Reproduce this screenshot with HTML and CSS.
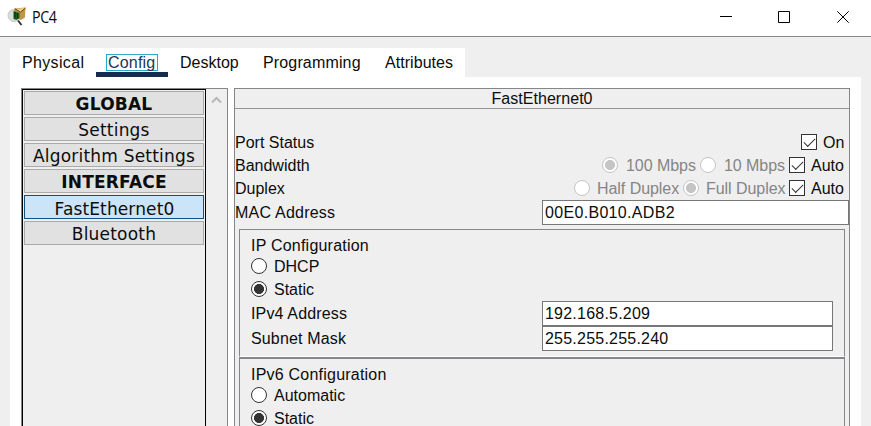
FILE: index.html
```html
<!DOCTYPE html>
<html lang="en">
<head>
<meta charset="utf-8">
<title>PC4</title>
<link rel="stylesheet" href="styles.css">
</head>
<body>
<header class="titlebar">
  <svg class="app-icon" width="20" height="20" viewBox="0 0 20 20">
    <circle cx="7" cy="8.500" r="6" fill="#d9dedb" stroke="#c3c8c5"/>
    <path d="M7 1.500l11.500-1-.5 10-4 2.500-6-2z" fill="#c39647"/>
    <path d="M8 1.800l5.500 3.400L18.500 1" fill="#ecd08a" stroke="#59401a" stroke-width="1"/>
    <path d="M6.500 4l6 2v5l-3 2-3-1z" fill="#17601c"/>
    <path d="M8 5v6M10.500 6v5" stroke="#082f0b"/>
    <path d="M11 13.500l3.500 4.500" stroke="#333" stroke-width="2"/>
  </svg>
  <h1 class="title">PC4</h1>
  <div class="controls">
    <svg width="12" height="12" viewBox="0 0 12 12"><path d="M0 5.500h12"/></svg>
    <svg class="maximize" width="12" height="12" viewBox="0 0 12 12"><path d="M.5.500h11v11H.5z"/></svg>
    <svg width="12" height="12" viewBox="0 0 12 12"><path d="M.3.300l11.400 11.400M11.700.300L.3 11.700"/></svg>
  </div>
</header>
<nav class="tabs">
  <span class="tab physical">Physical</span>
  <span class="tab active"><span class="focus">Config</span></span>
  <span class="tab desktop">Desktop</span>
  <span class="tab programming">Programming</span>
  <span class="tab attributes">Attributes</span>
</nav>
<main class="pane">
  <aside class="sidebar">
    <div class="list">
      <div class="item heading">GLOBAL</div>
      <div class="item">Settings</div>
      <div class="item">Algorithm Settings</div>
      <div class="item heading">INTERFACE</div>
      <div class="item selected">FastEthernet0</div>
      <div class="item">Bluetooth</div>
    </div>
    <div class="scroll"><svg width="11" height="8" viewBox="0 0 11 8"><path d="M1 6.500l4.500-4.500L10 6.500"/></svg></div>
  </aside>
  <section class="panel">
    <h2 class="panel-title">FastEthernet0</h2>
    <div class="row"><span>Port Status</span><span class="options"><i class="check"></i><span class="on">On</span></span></div>
    <div class="row"><span>Bandwidth</span><span class="options"><i class="radio off chosen"></i><span class="choice mbps100">100 Mbps</span><i class="radio off"></i><span class="choice mbps10">10 Mbps</span><i class="check"></i><span class="auto">Auto</span></span></div>
    <div class="row"><span>Duplex</span><span class="options"><i class="radio off"></i><span class="choice half">Half Duplex</span><i class="radio off chosen"></i><span class="choice full">Full Duplex</span><i class="check"></i><span class="auto">Auto</span></span></div>
    <div class="row mac"><span>MAC Address</span><span class="field mac-field">00E0.B010.ADB2</span></div>
    <div class="group ipv4">
      <div class="caption">IP Configuration</div>
      <div class="radio-row"><i class="radio"></i><span>DHCP</span></div>
      <div class="radio-row"><i class="radio chosen"></i><span>Static</span></div>
      <div class="field-row"><span>IPv4 Address</span><span class="field address">192.168.5.209</span></div>
      <div class="field-row"><span>Subnet Mask</span><span class="field mask">255.255.255.240</span></div>
    </div>
    <div class="group ipv6">
      <div class="caption">IPv6 Configuration</div>
      <div class="radio-row"><i class="radio"></i><span>Automatic</span></div>
      <div class="radio-row"><i class="radio chosen"></i><span>Static</span></div>
    </div>
  </section>
</main>
</body>
</html>
```
FILE: styles.css
```css
* { box-sizing: border-box; }
body {
  margin: 0;
  height: 426px;
  overflow: hidden;
  display: flex;
  flex-direction: column;
  background: #efefef;
  color: #0c0c0c;
  font: 16px/20px "Liberation Sans", Arial, sans-serif;
  white-space: nowrap;
}
.titlebar {
  flex: none;
  height: 37px;
  background: #fff;
  border-bottom: 1px solid #868788;
  display: flex;
  align-items: center;
  padding: 0 22px 0 7px;
}
.app-icon { margin-top: -2px; }
.title { margin: -3px 0 0 5px; font: 16px/20px "Open Sans", sans-serif; letter-spacing: -.4px; transform: scaleX(.89); transform-origin: left; }
.controls { margin: -3px 0 0 auto; display: flex; gap: 46px; }
.maximize { margin-right: 1px; }
.controls svg { fill: none; stroke: #000; stroke-width: 1; }
.tabs {
  flex: none;
  align-self: flex-start;
  margin: 11px 0 0 10px;
  width: 455px;
  height: 29px;
  background: #fff;
  display: flex;
}
.tab { padding-top: 5px; line-height: 20px; }
.physical { width: 86px; padding-left: 12px; letter-spacing: .35px; }
.active { width: 72px; padding: 6px 0 0 10px; border-bottom: 5px solid #162c4e; color: #203755; }
.focus { display: block; width: 52px; height: 17px; border: 1px solid #28aac8; line-height: 15px; padding-left: 1px; letter-spacing: .2px; }
.desktop { width: 83px; padding-left: 12px; }
.programming { width: 122px; padding-left: 12px; letter-spacing: .15px; }
.attributes { padding-left: 12px; letter-spacing: .05px; }
.pane { flex: 1; min-height: 0; margin: 0 10px; padding: 11px 11px 0; background: #fff; display: flex; }
.sidebar {
  width: 207px;
  border: 1px solid #85868a;
  border-bottom: 0;
  background: #efefef;
  display: flex;
}
.list {
  width: 184px;
  border: 1px solid #000;
  border-bottom: 0;
  padding: 1px;
  display: flex;
  flex-direction: column;
  gap: 2px;
}
.item {
  height: 24px;
  flex: none;
  border: 1px solid #aaa;
  background: #e1e1e1;
  text-align: center;
  font: 17px/24px "DejaVu Sans", Verdana, sans-serif;
  letter-spacing: .2px;
}
.heading { font-weight: bold; }
.selected { border-color: #105283; background: #cce4f7; line-height: 26px; letter-spacing: .12px; padding-left: 1px; }
.scroll { padding: 2px 0 0 5px; }
.scroll svg { fill: none; stroke: #b7b7b7; stroke-width: 2; margin-top: 5px; display: block; }
.panel {
  margin-left: 6px;
  width: 616px;
  border: 1px solid #85868a;
  border-bottom: 0;
  background: #efefef;
}
.panel-title {
  margin: 0 0 21px;
  height: 20px;
  font: 16px/19px "Liberation Sans", Arial, sans-serif;
  letter-spacing: .05px;
  text-align: center;
  border-bottom: 1px solid #929395;
}
.row { height: 23px; line-height: 20px; display: flex; justify-content: space-between; align-items: center; }
.row > span:first-child, .options > span { padding-top: 2px; }
.radio-row > span { padding-top: 1px; }
.options { display: flex; align-items: center; }
.radio, .check { flex: none; width: 16px; height: 16px; background: #fff; border: 1px solid #333; display: block; }
.radio { border-radius: 50%; }
.radio.chosen { background: radial-gradient(circle, #333 4.700px, #fff 5.300px); }
.off { border-color: #c5c5c5; }
.radio.off.chosen { background: radial-gradient(circle, #c5c5c5 4.700px, #fff 5.300px); }
.check { display: flex; align-items: center; justify-content: center; }
.check::after { content: ""; width: 10px; height: 5px; border: solid #333; border-width: 0 0 1.500px 1.500px; transform: translateY(-1px) rotate(-45deg); }
.on { width: 32px; padding-left: 6px; }
.auto { width: 44px; padding-left: 6px; }
.choice { padding-left: 8px; color: #858585; letter-spacing: -.05px; }
.mbps100 { width: 82px; }
.mbps10 { width: 73px; }
.half { width: 93px; padding-left: 7px; }
.full { width: 90px; padding-left: 7px; }
.mac { height: 27px; letter-spacing: .22px; }
.mac > span:first-child { margin-top: -2px; }
.field { height: 25px; border: 1px solid #777; background: #fff; padding-left: 2px; line-height: 23px; }
.mac-field { width: 307px; letter-spacing: .32px; }
.group { margin: 0 4px; padding: 5px 11px 0; border: 1px solid #85868a; border-bottom: 0; }
.ipv4 { margin-top: 3px; height: 128px; border-bottom: 1px solid #fff; }
.ipv6 { height: 80px; border-top-width: 2px; }
.caption { height: 20px; line-height: 22px; letter-spacing: .22px; }
.radio-row { height: 23px; padding-bottom: 1px; line-height: 21px; display: flex; align-items: center; gap: 7px; }
.field-row { height: 25px; display: flex; justify-content: space-between; align-items: center; letter-spacing: .15px; }
.field-row .field { width: 291px; letter-spacing: .22px; }
```
